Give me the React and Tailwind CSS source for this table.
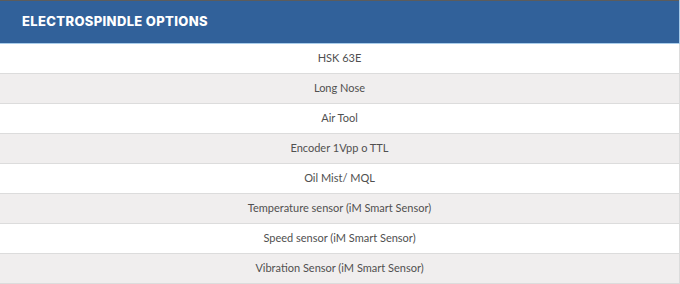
import React from "react";

const options = [
	"HSK 63E",
	"Long Nose",
	"Air Tool",
	"Encoder 1Vpp o TTL",
	"Oil Mist/ MQL",
	"Temperature sensor (iM Smart Sensor)",
	"Speed sensor (iM Smart Sensor)",
	"Vibration Sensor (iM Smart Sensor)",
];

const App = () => {
	return (
		<div className="w-[680px] h-[284px] bg-white overflow-hidden">
			<table className="w-full border-collapse">
				<thead>
					<tr>
						<th className="h-[43px] bg-[#31619a] border-t border-t-[#5c5c5c] border-b border-b-[#a9cdeb] border-r border-r-[#a9cdeb] pl-[22px] text-left font-['Inter',sans-serif] text-[13px] font-extrabold uppercase text-white tracking-[0.35px]">
							Electrospindle Options
						</th>
					</tr>
				</thead>
				<tbody>
					{options.map((opt, index) => (
						<tr
							key={opt}
							className={index % 2 === 0 ? "bg-white" : "bg-[#f0eeee]"}
						>
							<td className="h-[30px] border-b border-b-[#dcdcdc] border-r border-r-[#dcdcdc] text-center font-['Lato',sans-serif] text-[11px] text-[#505050]">
								{opt}
							</td>
						</tr>
					))}
				</tbody>
			</table>
		</div>
	);
};

export default App;
